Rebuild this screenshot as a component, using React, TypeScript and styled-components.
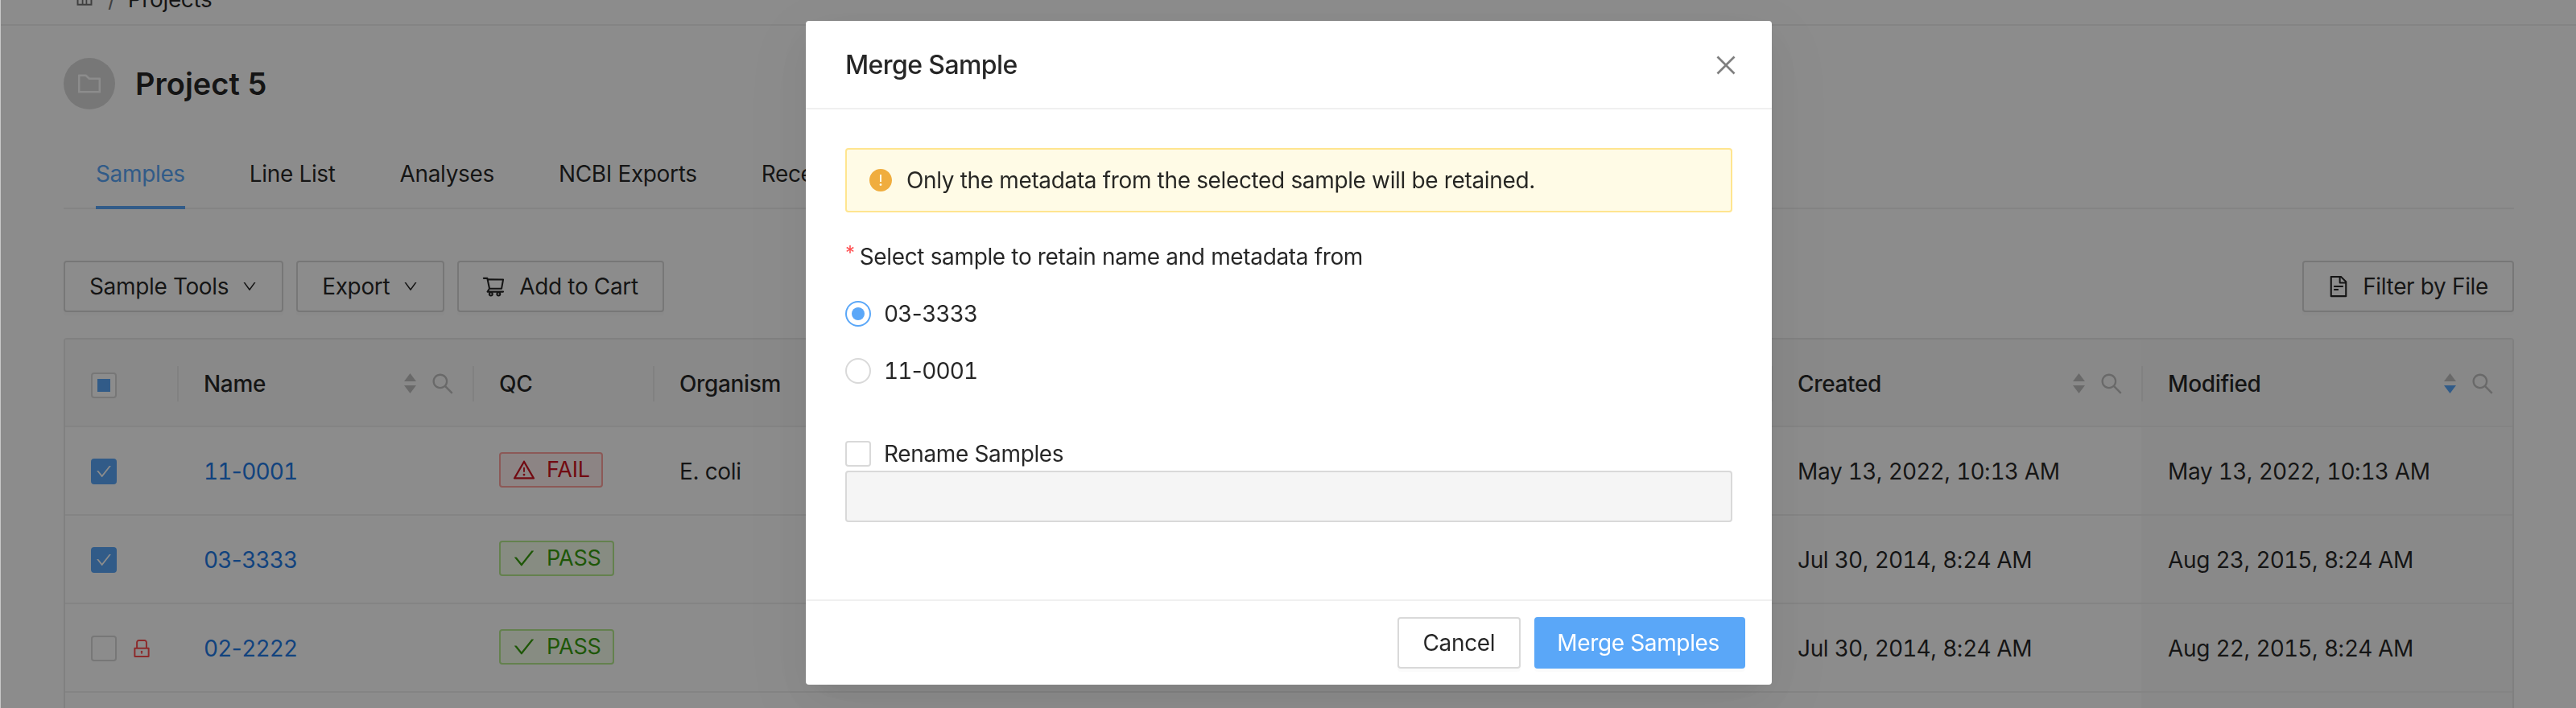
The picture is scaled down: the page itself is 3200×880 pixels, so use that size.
import styled, { createGlobalStyle } from 'styled-components';
import {
  AiFillExclamationCircle,
  AiOutlineCheck,
  AiOutlineClose,
  AiOutlineDown,
  AiOutlineFileText,
  AiOutlineFolder,
  AiOutlineHome,
  AiOutlineLock,
  AiOutlineSearch,
  AiOutlineShoppingCart,
  AiOutlineWarning,
} from 'react-icons/ai';

const PRIMARY = '#5aa7f8';
const LINK = '#1f7ae6';

const GlobalStyle = createGlobalStyle`
  html, body {
    margin: 0;
    height: 880px;
    overflow: hidden;
    background: #fff;
  }
  body {
    font-family: Inter, "Liberation Sans", sans-serif;
    font-size: 28px;
    line-height: 44px;
    letter-spacing: -0.35px;
    color: rgba(0, 0, 0, 0.85);
  }
`;

const Page = styled.div`
  height: 880px;
  overflow: hidden;
  border-left: 1px solid #c8c8c8;
`;

const TopBar = styled.header`
  height: 30px;
  border-bottom: 2px solid #f0f0f0;
  padding: 0 14px 0 90px;
  display: flex;
  align-items: flex-end;
  overflow: hidden;
`;

const Breadcrumb = styled.nav`
  display: flex;
  align-items: center;
  gap: 15px;
  flex-shrink: 0;
  margin-bottom: 9px;
  svg {
    margin-bottom: 8px;
  }
  svg,
  span:nth-child(2) {
    color: rgba(0, 0, 0, 0.55);
  }
`;

const Content = styled.main`
  padding: 40px 77px 0 78px;
`;

const ProjectHead = styled.div`
  display: flex;
  align-items: center;
  gap: 25px;
`;

const Avatar = styled.div`
  width: 64px;
  height: 64px;
  border-radius: 50%;
  background: #d9d9d9;
  color: #fff;
  display: flex;
  align-items: center;
  justify-content: center;
  font-size: 36px;
`;

const ProjectTitle = styled.h1`
  margin: 0;
  font-size: 38px;
  line-height: 64px;
  font-weight: 600;
  letter-spacing: 0;
`;

const Tabs = styled.div`
  margin-top: 36px;
  padding-left: 40px;
  display: flex;
  gap: 80px;
  border-bottom: 2px solid #f0f0f0;
`;

const Tab = styled.div<{ $active?: boolean }>`
  padding: 22px 0 18px;
  margin-bottom: -2px;
  border-bottom: 4px solid ${(p) => (p.$active ? PRIMARY : 'transparent')};
  color: ${(p) => (p.$active ? PRIMARY : 'inherit')};
`;

const Toolbar = styled.div`
  margin-top: 64px;
  display: flex;
  justify-content: space-between;
`;

const ButtonGroup = styled.div`
  display: flex;
  gap: 16px;
`;

const Button = styled.button<{ $iconFirst?: boolean; $gap?: number }>`
  height: 64px;
  padding: 0 30px 0 ${(p) => (p.$iconFirst ? 28 : 30)}px;
  box-sizing: border-box;
  display: inline-flex;
  align-items: center;
  gap: ${(p) => p.$gap ?? 16}px;
  background: #fff;
  border: 2px solid #d9d9d9;
  border-radius: 4px;
  box-shadow: 0 4px 0 rgba(0, 0, 0, 0.015);
  font: inherit;
  letter-spacing: inherit;
  color: rgba(0, 0, 0, 0.85);
  svg {
    flex-shrink: 0;
  }
`;

const TableBox = styled.table`
  margin-top: 32px;
  width: 100%;
  table-layout: fixed;
  border-collapse: separate;
  border-spacing: 0;
  border: 2px solid #eaeaea;
  border-bottom: 0;
  border-radius: 4px 4px 0 0;
`;

const HeadCell = styled.th<{ $sorted?: boolean; $divider?: boolean; $select?: boolean }>`
  position: relative;
  height: 109px;
  padding: 2px 21px 0 ${(p) => (p.$select ? 32 : 33)}px;
  box-sizing: border-box;
  background: ${(p) => (p.$sorted ? '#f7f7f7' : '#fafafa')};
  border-bottom: 2px solid #f0f0f0;
  text-align: left;
  font-weight: 500;
  &::before {
    content: '';
    display: ${(p) => (p.$divider ? 'block' : 'none')};
    position: absolute;
    left: 0;
    top: 33px;
    height: 44px;
    width: 2px;
    background: #ececec;
  }
`;

const HeadInner = styled.div`
  display: flex;
  align-items: center;
`;

const HeadLabel = styled.span`
  flex: 1;
`;

const SortTools = styled.span`
  display: flex;
  align-items: center;
  gap: 17px;
  color: #bfbfbf;
  font-size: 32px;
`;

const Cell = styled.td<{ $sorted?: boolean; $select?: boolean }>`
  height: 110px;
  padding: 2px 24px 0 ${(p) => (p.$select ? 32 : 33)}px;
  box-sizing: border-box;
  background: ${(p) => (p.$sorted ? '#fafafa' : '#fff')};
  border-bottom: 2px solid #f0f0f0;
  white-space: nowrap;
`;

const SelectWrap = styled.div`
  display: flex;
  align-items: center;
  gap: 17px;
  color: #ff4d4f;
  font-size: 28px;
`;

const Checkbox = styled.span<{ $checked?: boolean }>`
  width: 32px;
  height: 32px;
  box-sizing: border-box;
  flex-shrink: 0;
  display: inline-flex;
  align-items: center;
  justify-content: center;
  border-radius: 4px;
  border: 2px solid ${(p) => (p.$checked ? PRIMARY : '#d9d9d9')};
  background: ${(p) => (p.$checked ? PRIMARY : '#fff')};
  color: #fff;
`;

const Indeterminate = styled.span`
  width: 16px;
  height: 16px;
  background: ${PRIMARY};
`;

const SampleLink = styled.a`
  color: ${LINK};
`;

const DigitRun = styled.span`
  font-feature-settings: 'tnum';
  letter-spacing: -0.85px;
`;

const Tag = styled.span<{ $pass?: boolean }>`
  display: inline-flex;
  align-items: center;
  gap: 13px;
  height: 44px;
  box-sizing: border-box;
  padding: 0 14px;
  border-radius: 4px;
  font-size: 27px;
  letter-spacing: -0.2px;
  border: 2px solid ${(p) => (p.$pass ? '#b7eb8f' : '#ffa39e')};
  background: ${(p) => (p.$pass ? '#f6ffed' : '#fff1f0')};
  color: ${(p) => (p.$pass ? '#389e0d' : '#cf1322')};
`;

const Mask = styled.div`
  position: fixed;
  top: 0;
  bottom: 0;
  right: 0;
  left: 1px;
  padding-left: 1px;
  background: rgba(0, 0, 0, 0.45);
  display: flex;
  justify-content: center;
  align-items: flex-start;
`;

const Modal = styled.section`
  width: 1200px;
  height: 825px;
  margin-top: 26px;
  display: flex;
  flex-direction: column;
  background: #fff;
  border-radius: 4px;
  box-shadow: 0 12px 32px -16px rgba(0, 0, 0, 0.08),
    0 18px 56px 0 rgba(0, 0, 0, 0.05), 0 24px 96px 32px rgba(0, 0, 0, 0.03);
`;

const ModalHeader = styled.div`
  height: 110px;
  box-sizing: border-box;
  flex-shrink: 0;
  padding: 2px 40px 0 49px;
  border-bottom: 2px solid #f0f0f0;
  display: flex;
  align-items: center;
  justify-content: space-between;
  color: rgba(0, 0, 0, 0.5);
  font-size: 34px;
`;

const ModalTitle = styled.h2`
  margin: 0;
  font-size: 32px;
  font-weight: 500;
  letter-spacing: -0.6px;
  color: rgba(0, 0, 0, 0.85);
`;

const ModalBody = styled.div`
  flex: 1;
  padding: 48px 49px 0;
`;

const Alert = styled.div`
  height: 80px;
  box-sizing: border-box;
  padding: 0 26px;
  display: flex;
  align-items: center;
  gap: 16px;
  background: #fffbe6;
  border: 2px solid #ffe58f;
  border-radius: 4px;
  svg {
    color: #f0ad3e;
    flex-shrink: 0;
  }
`;

const FieldLabel = styled.div`
  margin-top: 33px;
  display: flex;
  gap: 6px;
`;

const Required = styled.span`
  color: #ff4d4f;
  font-size: 24px;
  line-height: 36px;
`;

const RadioRow = styled.label<{ $gap: number }>`
  margin-top: ${(p) => p.$gap}px;
  display: flex;
  align-items: center;
  gap: 16px;
`;

const Radio = styled.span<{ $on?: boolean }>`
  width: 32px;
  height: 32px;
  box-sizing: border-box;
  border-radius: 50%;
  border: 2px solid ${(p) => (p.$on ? PRIMARY : '#d9d9d9')};
  display: flex;
  align-items: center;
  justify-content: center;
`;

const RadioDot = styled.span`
  width: 16px;
  height: 16px;
  border-radius: 50%;
  background: ${PRIMARY};
`;

const RenameRow = styled.label`
  margin-top: 60px;
  height: 42px;
  display: flex;
  align-items: center;
  gap: 16px;
`;

const DisabledInput = styled.div`
  height: 64px;
  box-sizing: border-box;
  background: #f5f5f5;
  border: 2px solid #d9d9d9;
  border-radius: 4px;
`;

const ModalFooter = styled.div`
  height: 106px;
  box-sizing: border-box;
  flex-shrink: 0;
  padding: 20px 33px 0 0;
  border-top: 2px solid #f0f0f0;
  display: flex;
  justify-content: flex-end;
  gap: 17px;
`;

const PrimaryButton = styled(Button)`
  padding-left: 26px;
  background: ${PRIMARY};
  border-color: ${PRIMARY};
  color: #fff;
`;

// digits are tabular, the hyphens, colons and commas between them are not
function Tabular({ text }: { text: string }) {
  return (
    <span>
      {text.split(/(\d+)/).map((part, i) =>
        /\d/.test(part) ? <DigitRun key={i}>{part}</DigitRun> : part,
      )}
    </span>
  );
}

function SortIcon({ active }: { active?: boolean }) {
  return (
    <svg width="15" height="25" viewBox="0 0 15 25">
      <path d="M7.5 0 L15 10 H0 Z" fill="#bfbfbf" />
      <path d="M7.5 25 L15 15 H0 Z" fill={active ? PRIMARY : '#bfbfbf'} />
    </svg>
  );
}

function Header({ label, sortable, sorted, divider }: { label: string; sortable?: boolean; sorted?: boolean; divider?: boolean }) {
  return (
    <HeadCell $sorted={sorted} $divider={divider}>
      <HeadInner>
        <HeadLabel>{label}</HeadLabel>
        {sortable && (
          <SortTools>
            <SortIcon active={sorted} />
            <AiOutlineSearch />
          </SortTools>
        )}
      </HeadInner>
    </HeadCell>
  );
}

const rows = [
  { id: '11-0001', checked: true, qc: 'FAIL', organism: 'E. coli', created: 'May 13, 2022, 10:13 AM', modified: 'May 13, 2022, 10:13 AM' },
  { id: '03-3333', checked: true, qc: 'PASS', organism: '', created: 'Jul 30, 2014, 8:24 AM', modified: 'Aug 23, 2015, 8:24 AM' },
  { id: '02-2222', checked: false, locked: true, qc: 'PASS', organism: '', created: 'Jul 30, 2014, 8:24 AM', modified: 'Aug 22, 2015, 8:24 AM' },
];

export default function App() {
  return (
    <>
      <GlobalStyle />
      <Page>
        <TopBar>
          <Breadcrumb>
            <AiOutlineHome size={28} />
            <span>/</span>
            <span>Projects</span>
          </Breadcrumb>
        </TopBar>
        <Content>
          <ProjectHead>
            <Avatar>
              <AiOutlineFolder />
            </Avatar>
            <ProjectTitle>Project 5</ProjectTitle>
          </ProjectHead>
          <Tabs>
            <Tab $active>Samples</Tab>
            <Tab>Line List</Tab>
            <Tab>Analyses</Tab>
            <Tab>NCBI Exports</Tab>
            <Tab>Recent Activity</Tab>
            <Tab>Settings</Tab>
          </Tabs>
          <Toolbar>
            <ButtonGroup>
              <Button>
                Sample Tools
                <AiOutlineDown size={20} />
              </Button>
              <Button>
                Export
                <AiOutlineDown size={20} />
              </Button>
              <Button $iconFirst $gap={17}>
                <AiOutlineShoppingCart size={30} />
                Add to Cart
              </Button>
            </ButtonGroup>
            <Button $iconFirst $gap={15}>
              <AiOutlineFileText size={30} />
              Filter by File
            </Button>
          </Toolbar>
          <TableBox>
            <colgroup>
              <col style={{ width: 139 }} />
              <col style={{ width: 367 }} />
              <col style={{ width: 224 }} />
              <col />
              <col style={{ width: 460 }} />
              <col style={{ width: 461 }} />
            </colgroup>
            <thead>
              <tr>
                <HeadCell $select>
                  <Checkbox>
                    <Indeterminate />
                  </Checkbox>
                </HeadCell>
                <Header label="Name" sortable divider />
                <Header label="QC" divider />
                <Header label="Organism" divider />
                <Header label="Created" sortable divider />
                <Header label="Modified" sortable sorted divider />
              </tr>
            </thead>
            <tbody>
              {rows.map((row) => (
                <tr key={row.id}>
                  <Cell $select>
                    <SelectWrap>
                      <Checkbox $checked={row.checked}>
                        {row.checked && <AiOutlineCheck size={22} />}
                      </Checkbox>
                      {row.locked && <AiOutlineLock />}
                    </SelectWrap>
                  </Cell>
                  <Cell>
                    <SampleLink>
                      <Tabular text={row.id} />
                    </SampleLink>
                  </Cell>
                  <Cell>
                    <Tag $pass={row.qc === 'PASS'}>
                      {row.qc === 'PASS' ? <AiOutlineCheck size={30} /> : <AiOutlineWarning size={30} />}
                      {row.qc}
                    </Tag>
                  </Cell>
                  <Cell>{row.organism}</Cell>
                  <Cell>
                    <Tabular text={row.created} />
                  </Cell>
                  <Cell $sorted>
                    <Tabular text={row.modified} />
                  </Cell>
                </tr>
              ))}
              <tr>
                <Cell />
                <Cell />
                <Cell />
                <Cell />
                <Cell />
                <Cell $sorted />
              </tr>
            </tbody>
          </TableBox>
        </Content>
      </Page>
      <Mask>
        <Modal>
          <ModalHeader>
            <ModalTitle>Merge Sample</ModalTitle>
            <AiOutlineClose />
          </ModalHeader>
          <ModalBody>
            <Alert>
              <AiFillExclamationCircle size={32} />
              Only the metadata from the selected sample will be retained.
            </Alert>
            <FieldLabel>
              <Required>*</Required>
              Select sample to retain name and metadata from
            </FieldLabel>
            <RadioRow $gap={27}>
              <Radio $on>
                <RadioDot />
              </Radio>
              <Tabular text="03-3333" />
            </RadioRow>
            <RadioRow $gap={27}>
              <Radio />
              <Tabular text="11-0001" />
            </RadioRow>
            <RenameRow>
              <Checkbox />
              Rename Samples
            </RenameRow>
            <DisabledInput />
          </ModalBody>
          <ModalFooter>
            <Button>Cancel</Button>
            <PrimaryButton>Merge Samples</PrimaryButton>
          </ModalFooter>
        </Modal>
      </Mask>
    </>
  );
}
